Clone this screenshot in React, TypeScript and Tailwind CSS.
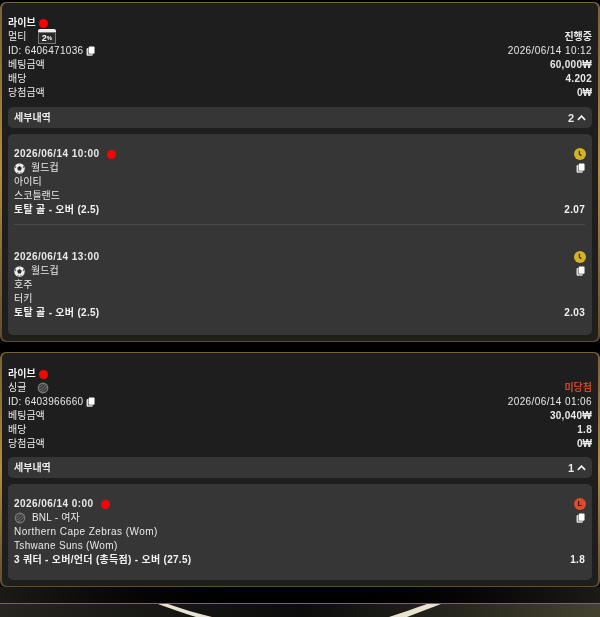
const FONT = "font-['Liberation_Sans','Noto_Sans_CJK_KR',sans-serif]"

const CopyIcon = ({ className = '' }: { className?: string }) => (
  <svg viewBox="0 0 10 11" className={`h-[10px] w-[9px] ${className}`}>
    <rect x="3" y="0.5" width="6.5" height="8" rx="1" fill="#fff" />
    <path d="M1.6 2.2h1v7h5v.6a1 1 0 0 1-1 1H1.6a1 1 0 0 1-1-1V3.2a1 1 0 0 1 1-1z" fill="#ddd" />
  </svg>
)

const SoccerIcon = () => (
  <svg viewBox="0 0 20 20" className="h-[11px] w-[11px]">
    <circle cx="10" cy="10" r="9.5" fill="#eee" />
    <path d="M10 5.5l4.2 3.1-1.6 5H7.4l-1.6-5z" fill="#2e2e2e" />
    <path d="M8 1.2h4l-2 1.6zM1.6 7l2-2 .3 2.8-1.3 2zM18.4 7l-2-2-.3 2.8 1.3 2zM5.4 16.6l2.6.4 1 1.6-2.4-.6zM14.6 16.6l-2.6.4-1 1.6 2.4-.6z" fill="#555" />
  </svg>
)

const VolleyIcon = () => (
  <svg viewBox="0 0 20 20" className="h-[12px] w-[12px]">
    <circle cx="10" cy="10" r="9" fill="#777" />
    <circle cx="10" cy="10" r="6.8" fill="#3a3a3a" />
    <path d="M4 13C8 12 13 8 15 4M6 16c4-1 9-5 11-9M3.5 9C6 8 9 6 11 3.5" stroke="#888" strokeWidth="1.2" fill="none" />
  </svg>
)

const LiveDot = () => <span className="h-[9px] w-[9px] rounded-full bg-[#ff0000]" />

const PercentBadge = () => (
  <span className="absolute left-[30px] top-[-1px] flex w-[18px] flex-col items-stretch">
    <span className="h-[3px] rounded-t-[2px] bg-[#eee]" />
    <span className="flex h-[12px] items-center justify-center border border-[#777] bg-[#2a2a2a] text-[9px] font-bold leading-none text-white">
      2<span className="text-[6px]">%</span>
    </span>
  </span>
)

const Row = ({ left, right, bold }: { left: React.ReactNode; right?: React.ReactNode; bold?: boolean }) => (
  <div className={`relative flex h-[14px] items-center justify-between pt-[2px] ${bold ? 'font-bold text-[#f2f2f2]' : ''}`}>
    <div className="relative flex items-center">{left}</div>
    {right}
  </div>
)

const StatusIcon = ({ kind }: { kind: 'pending' | 'lost' }) =>
  kind === 'pending' ? (
    <svg viewBox="0 0 12 12" className="h-[12px] w-[12px]">
      <circle cx="6" cy="6" r="6" fill="#d4b12a" />
      <path d="M5.4 2.8v3.4l2 1.4" stroke="#3a3205" strokeWidth="1.3" fill="none" />
    </svg>
  ) : (
    <span className="flex h-[12px] w-[12px] items-center justify-center rounded-full bg-[#df4a2c] text-[8px] font-bold leading-none text-[#3a1108]">
      L
    </span>
  )

interface Leg {
  date: string
  league: string
  sport: 'soccer' | 'volley'
  home: string
  away: string
  market: string
  odds: string
  status: 'pending' | 'lost'
  dot?: boolean
  latin?: boolean
}

const LegBlock = ({ leg }: { leg: Leg }) => (
  <div>
    <div className="flex h-[14px] items-center justify-between pt-[2px]">
      <div className="flex items-center gap-[7px] font-bold">
        <span className="tracking-[0.45px]">{leg.date}</span>
        {leg.dot && <LiveDot />}
      </div>
      <span className="mr-[-1px] flex"><StatusIcon kind={leg.status} /></span>
    </div>
    <div className="flex h-[14px] items-center justify-between pt-[2px]">
      <div className="flex items-center gap-[6px]">
        {leg.sport === 'soccer' ? <SoccerIcon /> : <VolleyIcon />}
        <span className={leg.latin ? 'tracking-[0.2px]' : ''}>{leg.league}</span>
      </div>
      <CopyIcon />
    </div>
    <div className={`h-[14px] pt-px leading-[14px] ${leg.latin ? 'tracking-[0.45px]' : ''}`}>{leg.home}</div>
    <div className={`h-[14px] pt-px leading-[14px] ${leg.latin ? 'tracking-[0.33px]' : ''}`}>{leg.away}</div>
    <div className="flex h-[14px] items-center justify-between pt-[2px] font-bold text-[#f2f2f2]">
      <span className="tracking-[0.3px]">{leg.market}</span>
      <span className="tracking-[0.3px]">{leg.odds}</span>
    </div>
  </div>
)

const BetCard = ({
  type, statusText, lost, id, placed, stake, odds, count, legs, icon, topGap, barGap, bodyEnd,
}: {
  type: string
  statusText: string
  lost?: boolean
  id: string
  placed: string
  stake: string
  odds: string
  count: number
  legs: Leg[]
  icon: React.ReactNode
  topGap: string
  barGap: string
  bodyEnd: string
}) => (
  <div className="rounded-[6px] bg-gradient-to-b from-[#7a6232] via-[#b98c3c] to-[#5f4d2a] px-[2px] py-px">
    <div className={`rounded-[5px] bg-[#1e1e1e] px-[6px] pb-[6px] ${topGap}`}>
      <Row bold left={<><span>라이브</span><span className="ml-[3px] flex"><LiveDot /></span></>} />
      <Row
        left={<><span>{type}</span>{icon}</>}
        right={<span className={`font-bold ${lost ? 'text-[#c9462c]' : ''}`}>{statusText}</span>}
      />
      <Row
        left={<><span className="tracking-[0.3px]">ID: {id}</span><CopyIcon className="ml-[3px]" /></>}
        right={<span className="tracking-[0.4px]">{placed}</span>}
      />
      <Row left="베팅금액" right={<span className="font-bold tracking-[0.3px]">{stake}</span>} />
      <Row left="배당" right={<span className="font-bold tracking-[0.3px]">{odds}</span>} />
      <Row left="당첨금액" right={<span className="font-bold">0₩</span>} />

      <div className={`${barGap} flex h-[21px] items-center justify-between rounded-[5px] bg-[#363636] pl-[6px] pr-[6px]`}>
        <span className="font-bold">세부내역</span>
        <span className="flex items-center gap-[3px] text-[11px] font-bold">
          {count}
          <svg viewBox="0 0 10 6" className="h-[6px] w-[9px]">
            <path d="M1 5l4-4 4 4" stroke="#eee" strokeWidth="2" fill="none" />
          </svg>
        </span>
      </div>

      <div className={`mt-[6px] rounded-[5px] bg-[#363636] pl-[6px] pr-[7px] pt-[12px] ${bodyEnd}`}>
        {legs.map((leg, i) => (
          <div key={leg.date}>
            {i > 0 && <div className="mb-[24px] mt-[8px] h-px bg-[#4a4a4a]" />}
            <LegBlock leg={leg} />
          </div>
        ))}
      </div>
    </div>
  </div>
)

const firstLegs: Leg[] = [
  { date: '2026/06/14 10:00', league: '월드컵', sport: 'soccer', home: '아이티', away: '스코틀랜드', market: '토탈 골 - 오버 (2.5)', odds: '2.07', status: 'pending', dot: true },
  { date: '2026/06/14 13:00', league: '월드컵', sport: 'soccer', home: '호주', away: '터키', market: '토탈 골 - 오버 (2.5)', odds: '2.03', status: 'pending' },
]

const secondLegs: Leg[] = [
  { date: '2026/06/14 0:00', league: 'BNL - 여자', sport: 'volley', home: 'Northern Cape Zebras (Wom)', away: 'Tshwane Suns (Wom)', market: '3 쿼터 - 오버/언더 (총득점) - 오버 (27.5)', odds: '1.8', status: 'lost', dot: true, latin: true },
]

export default function App() {
  return (
    <div className={`${FONT} h-[617px] w-[600px] overflow-hidden bg-black pt-[2px] text-[10px] leading-[14px] text-[#e8e8e8] blur-[0.5px]`}>
      <BetCard
        type="멀티"
        statusText="진행중"
        id="6406471036"
        placed="2026/06/14 10:12"
        stake="60,000₩"
        odds="4.202"
        count={2}
        legs={firstLegs}
        icon={<PercentBadge />}
        topGap="pt-[12px]"
        barGap="mt-[8px]"
        bodyEnd="pb-[16px]"
      />
      <div className="mt-[10px]">
        <BetCard
          type="싱글"
          statusText="미당첨"
          lost
          id="6403966660"
          placed="2026/06/14 01:06"
          stake="30,040₩"
          odds="1.8"
          count={1}
          legs={secondLegs}
          icon={<span className="absolute left-[29px] top-[1px]"><VolleyIcon /></span>}
          topGap="pt-[13px]"
          barGap="mt-[7px]"
          bodyEnd="pb-[14px]"
        />
      </div>
      {/* footer strip behind the list */}
      <div className="h-[16px] bg-gradient-to-r from-[#1c1a14] via-black to-[#1c1a14]" />
      <div className="h-[14px] border-t border-[#7a6a3c] bg-gradient-to-r from-[#26251f] via-[#0c0c0c] to-[#44422f]">
        <svg viewBox="0 0 600 13" className="h-[13px] w-[600px]">
          <path d="M158 0h10c14 5 28 9 44 13h-16C182 9 170 4 158 0z" fill="#e8e4d0" />
          <path d="M441 0h-14c-14 5-26 9-38 13h18C418 9 430 4 441 0z" fill="#e8e4d0" />
        </svg>
      </div>
    </div>
  )
}
